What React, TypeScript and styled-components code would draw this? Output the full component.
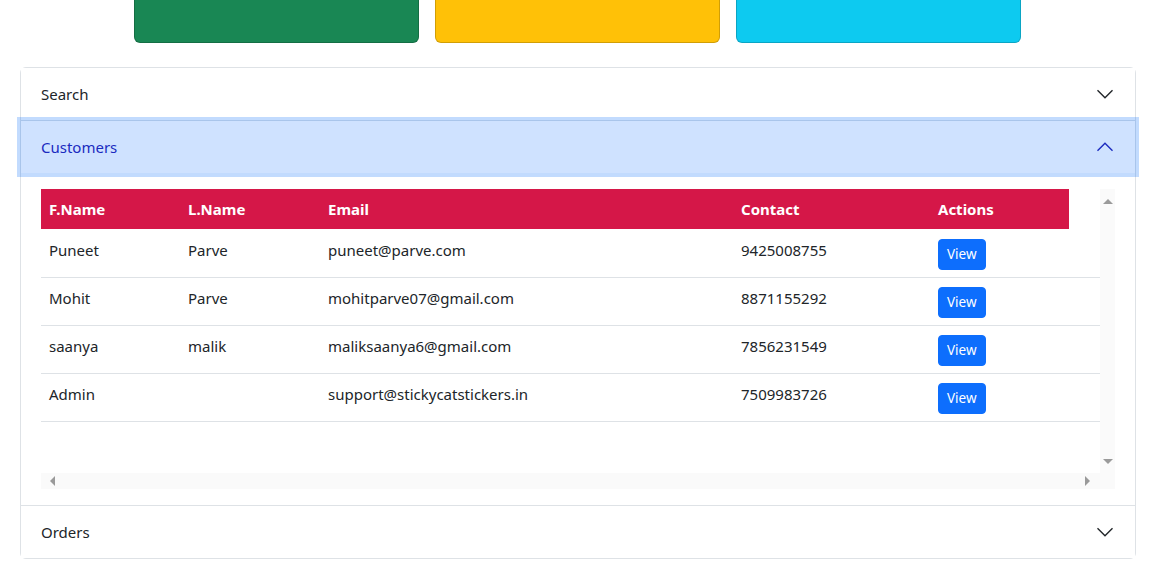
import React from "react";
import styled, { createGlobalStyle, css } from "styled-components";

const Global = createGlobalStyle`
  html, body { margin: 0; padding: 0; background: #fff; }
  body {
    font-family: "Noto Sans", "Open Sans", Arial, sans-serif;
    color: #212529;
    font-size: 15px;
  }
  * { box-sizing: border-box; }
`;

const Page = styled.div`
  width: 1116px;
  margin-left: 20px;
  display: flex;
  flex-direction: column;
  gap: 24px;
`;

const CardRow = styled.div`
  display: flex;
  justify-content: center;
  gap: 16px;
  padding-right: 2px;
`;

const StatCard = styled.div<{ $bg: string }>`
  width: 285px;
  height: 43px;
  background: ${(p) => p.$bg};
  border: 1px solid rgba(0, 0, 0, 0.18);
  border-top: none;
  border-radius: 0 0 6px 6px;
`;

const Accordion = styled.div`
  border: 1px solid #dee2e6;
  border-radius: 6px;
  display: flex;
  flex-direction: column;
`;

const Item = styled.div<{ $last?: boolean }>`
  display: flex;
  flex-direction: column;
  ${(p) => !p.$last && css`border-bottom: 1px solid #dee2e6;`}
`;

const HeaderButton = styled.button<{ $open?: boolean }>`
  position: relative;
  display: flex;
  align-items: center;
  width: 100%;
  height: 52px;
  padding: 14px 20px;
  border: 0;
  background: #fff;
  color: #212529;
  font-family: inherit;
  font-size: 15px;
  line-height: 24px;
  text-align: left;
  cursor: pointer;
  border-radius: 0;
  ${(p) =>
    p.$open &&
    css`
      background: #cfe2ff;
      color: #1b2bbf;
      z-index: 3;
      box-shadow: 0 0 0 4px rgba(13, 110, 253, 0.25);
    `}
`;

const Chevron = styled.svg<{ $open?: boolean }>`
  width: 20px;
  height: 20px;
  margin-left: auto;
  flex-shrink: 0;
  ${(p) => p.$open && css`transform: rotate(180deg);`}
`;

const Body = styled.div`
  padding: 16px 20px;
`;

/* Scroll frame: viewport plus classic scrollbars drawn as a grid */
const ScrollFrame = styled.div`
  height: 300px;
  display: grid;
  grid-template-columns: 1fr 15px;
  grid-template-rows: 1fr 16px;
`;

const Viewport = styled.div`
  overflow: hidden;
`;

const VBar = styled.div`
  background: #fafafa;
  display: flex;
  flex-direction: column;
  justify-content: space-between;
  align-items: center;
  padding: 10px 0 9px;
`;

const HBar = styled.div`
  background: #fafafa;
  display: flex;
  justify-content: space-between;
  align-items: center;
  padding: 0 10px 0 9px;
`;

const Corner = styled.div`
  background: #fafafa;
`;

type Dir = "up" | "down" | "left" | "right";

const arrow = "#9a9a9a";

const Arrow = styled.span<{ $dir: Dir }>`
  width: 0;
  height: 0;
  display: block;
  ${(p) =>
    p.$dir === "up"
      ? css`
          border-left: 5px solid transparent;
          border-right: 5px solid transparent;
          border-bottom: 5px solid ${arrow};
        `
      : p.$dir === "down"
      ? css`
          border-left: 5px solid transparent;
          border-right: 5px solid transparent;
          border-top: 5px solid ${arrow};
        `
      : p.$dir === "left"
      ? css`
          border-top: 5px solid transparent;
          border-bottom: 5px solid transparent;
          border-right: 5px solid ${arrow};
        `
      : css`
          border-top: 5px solid transparent;
          border-bottom: 5px solid transparent;
          border-left: 5px solid ${arrow};
        `}
`;

const Table = styled.table`
  width: 100%;
  border-collapse: collapse;
  table-layout: fixed;
`;

const Th = styled.th<{ $w: number; $blank?: boolean }>`
  width: ${(p) => p.$w}px;
  background: ${(p) => (p.$blank ? "#fff" : "#d51748")};
  border-bottom: 1px solid #fff;
  color: #fff;
  font-weight: 700;
  font-size: 15px;
  line-height: 24px;
  padding: 8px;
  text-align: left;
`;

const Td = styled.td`
  padding: 8px;
  font-size: 15px;
  line-height: 24px;
  vertical-align: top;
  border-bottom: 1px solid #dee2e6;
  white-space: nowrap;
`;

const ViewButton = styled.button`
  display: block;
  height: 31px;
  margin-top: 1px;
  margin-bottom: -1px;
  background: #0d6efd;
  color: #fff;
  border: 1px solid #0d6efd;
  border-radius: 4px;
  padding: 4px 8px;
  font-family: inherit;
  font-size: 13.5px;
  line-height: 21px;
  cursor: pointer;
`;

const ChevronIcon = ({ open }: { open?: boolean }) => (
  <Chevron $open={open} viewBox="0 0 16 16" fill="none">
    <path
      d="M2 5L8 11L14 5"
      stroke={open ? "#1b2bbf" : "#212529"}
      strokeWidth="1.1"
    />
  </Chevron>
);

const customers = [
  { f: "Puneet", l: "Parve", e: "puneet@parve.com", c: "9425008755" },
  { f: "Mohit", l: "Parve", e: "mohitparve07@gmail.com", c: "8871155292" },
  { f: "saanya", l: "malik", e: "maliksaanya6@gmail.com", c: "7856231549" },
  { f: "Admin", l: "", e: "support@stickycatstickers.in", c: "7509983726" },
];

export default function App() {
  return (
    <>
      <Global />
      <Page>
        <CardRow>
          <StatCard $bg="#198754" />
          <StatCard $bg="#ffc107" />
          <StatCard $bg="#0dcaf0" />
        </CardRow>
        <Accordion>
          <Item>
            <HeaderButton>
              Search
              <ChevronIcon />
            </HeaderButton>
          </Item>
          <Item>
            <HeaderButton $open>
              Customers
              <ChevronIcon open />
            </HeaderButton>
            <Body>
              <ScrollFrame>
                <Viewport>
                  <Table>
                    <thead>
                      <tr>
                        <Th $w={139}>F.Name</Th>
                        <Th $w={140}>L.Name</Th>
                        <Th $w={413}>Email</Th>
                        <Th $w={197}>Contact</Th>
                        <Th $w={139}>Actions</Th>
                        <Th $w={31} $blank />
                      </tr>
                    </thead>
                    <tbody>
                      {customers.map((c) => (
                        <tr key={c.e}>
                          <Td>{c.f}</Td>
                          <Td>{c.l}</Td>
                          <Td>{c.e}</Td>
                          <Td>{c.c}</Td>
                          <Td>
                            <ViewButton>View</ViewButton>
                          </Td>
                          <Td />
                        </tr>
                      ))}
                    </tbody>
                  </Table>
                </Viewport>
                <VBar>
                  <Arrow $dir="up" />
                  <Arrow $dir="down" />
                </VBar>
                <HBar>
                  <Arrow $dir="left" />
                  <Arrow $dir="right" />
                </HBar>
                <Corner />
              </ScrollFrame>
            </Body>
          </Item>
          <Item $last>
            <HeaderButton>
              Orders
              <ChevronIcon />
            </HeaderButton>
          </Item>
        </Accordion>
      </Page>
    </>
  );
}
